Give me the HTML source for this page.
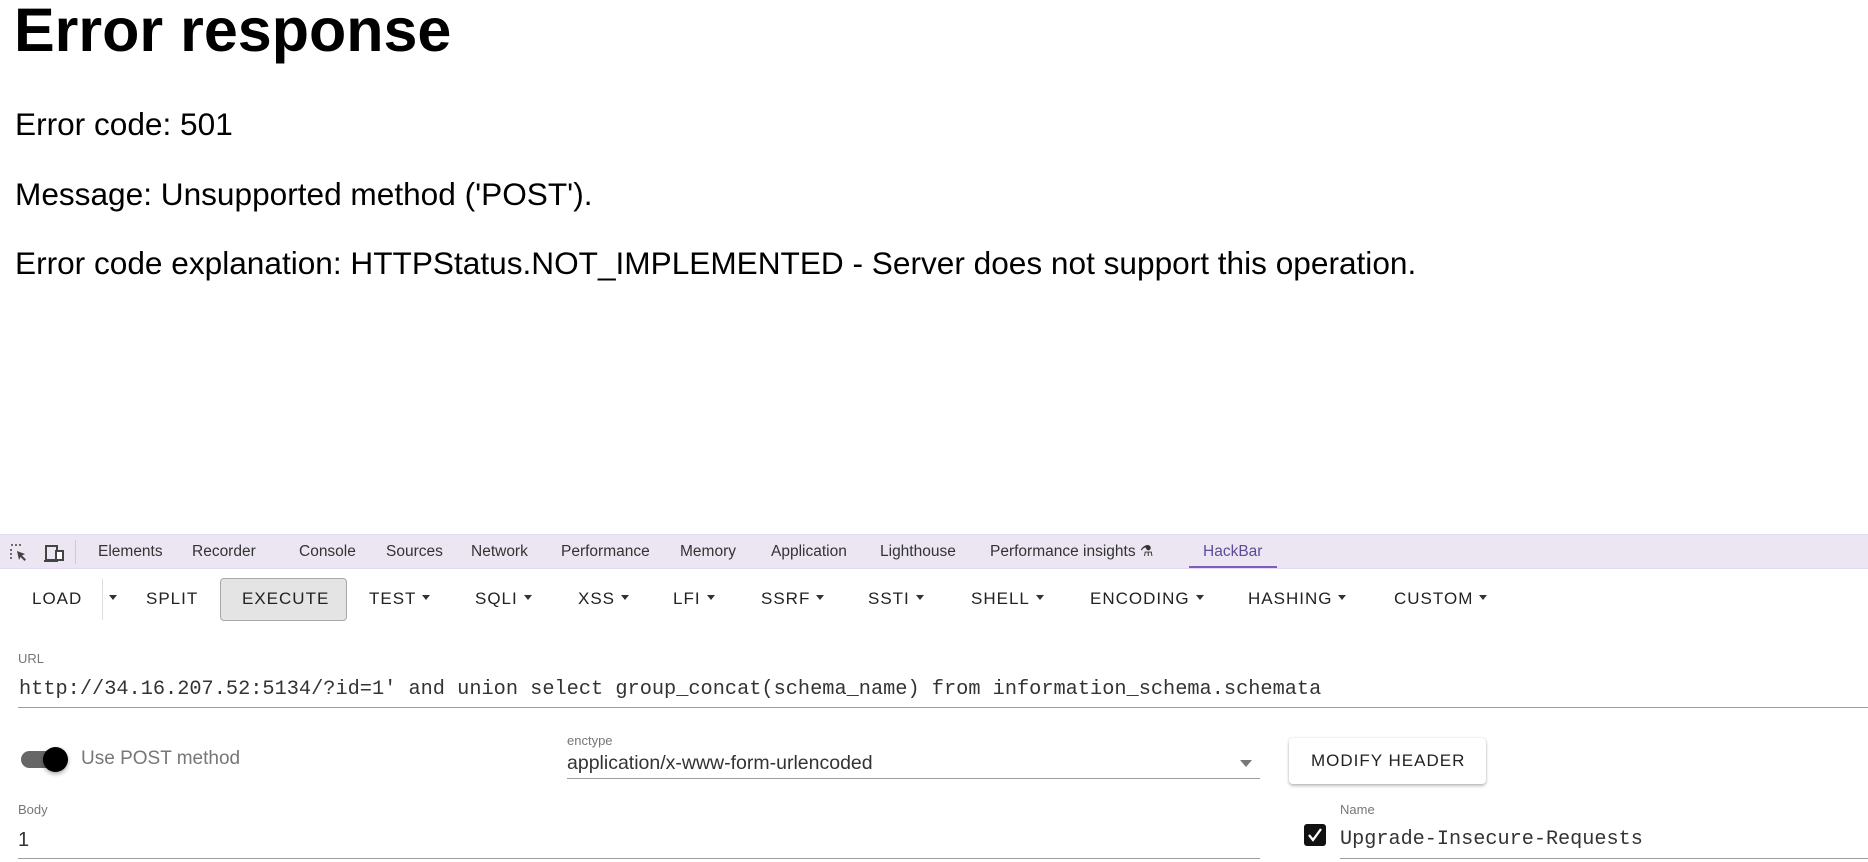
<!DOCTYPE html>
<html><head><meta charset="utf-8">
<style>
*{margin:0;padding:0;box-sizing:border-box}
body{width:1868px;height:862px;position:relative;overflow:hidden;background:#fff;font-family:"Liberation Sans",sans-serif;color:#000}
.a{position:absolute;white-space:nowrap}
.p{font-size:31.6px;line-height:40px;left:15px}
.tab{font-size:15.5px;color:#333;line-height:20px;top:542px}
.tb{font-size:17px;letter-spacing:1px;color:#222;line-height:24px;top:587px}
.tri{display:inline-block;width:0;height:0;border-left:4.5px solid transparent;border-right:4.5px solid transparent;border-top:5px solid #333;vertical-align:middle;margin-left:6px;position:relative;top:-2px}
.lbl{font-size:13px;color:#777;line-height:16px}
.line{position:absolute;height:1px;background:#9e9e9e}
.mono{font-family:"Liberation Mono",monospace;color:#333}
</style></head><body>
<div class="a" style="left:14px;top:-8px;font-size:61px;font-weight:bold;line-height:76px">Error response</div>
<div class="a p" style="top:104px">Error code: 501</div>
<div class="a p" style="top:174px">Message: Unsupported method ('POST').</div>
<div class="a p" style="top:243px">Error code explanation: HTTPStatus.NOT_IMPLEMENTED - Server does not support this operation.</div>

<div class="a" style="left:0;top:534px;width:1868px;height:35px;background:#ece6f3;border-top:1px solid #e3d8f5;border-bottom:1px solid #e3d8f5"></div>
<svg class="a" style="left:9px;top:543px" width="20" height="20" viewBox="0 0 20 20"><path d="M2 2h2M6 2h2M10 2h2M2 6v2M2 10v2M2 14v2" stroke="#444" stroke-width="1.5"/><path d="M8 8l8 3-3 1.5 4 4-1.5 1.5-4-4L10 17z" fill="#444"/></svg>
<svg class="a" style="left:44px;top:543px" width="22" height="20" viewBox="0 0 22 20"><rect x="2" y="3" width="11" height="14" fill="none" stroke="#444" stroke-width="2"/><rect x="12" y="8" width="7" height="9" fill="#fff" stroke="#444" stroke-width="2"/><path d="M0 18h14" stroke="#444" stroke-width="2"/></svg>
<div class="a" style="left:75px;top:540px;width:1px;height:24px;background:#ccc"></div>
<div class="a tab" style="left:98px">Elements</div>
<div class="a tab" style="left:192px">Recorder</div>
<div class="a tab" style="left:299px">Console</div>
<div class="a tab" style="left:386px">Sources</div>
<div class="a tab" style="left:471px">Network</div>
<div class="a tab" style="left:561px">Performance</div>
<div class="a tab" style="left:680px">Memory</div>
<div class="a tab" style="left:771px">Application</div>
<div class="a tab" style="left:880px">Lighthouse</div>
<div class="a tab" style="left:990px">Performance insights <span style="font-size:15px">⚗</span></div>
<div class="a tab" style="left:1203px;color:#5e4a99">HackBar</div>
<div class="a" style="left:1189px;top:566px;width:88px;height:2px;background:#7a5fb5"></div>

<div class="a tb" style="left:32px">LOAD</div>
<div class="a" style="left:102px;top:579px;width:1px;height:41px;background:#ddd"></div>
<div class="a tb" style="left:103px"><span class="tri"></span></div>
<div class="a tb" style="left:146px">SPLIT</div>
<div class="a" style="left:220px;top:578px;width:127px;height:43px;background:#e4e4e4;border:1.5px solid #a8a8a8;border-radius:4px"></div>
<div class="a tb" style="left:242px">EXECUTE</div>
<div class="a tb" style="left:369px">TEST<span class="tri"></span></div>
<div class="a tb" style="left:475px">SQLI<span class="tri"></span></div>
<div class="a tb" style="left:578px">XSS<span class="tri"></span></div>
<div class="a tb" style="left:673px">LFI<span class="tri"></span></div>
<div class="a tb" style="left:761px">SSRF<span class="tri"></span></div>
<div class="a tb" style="left:868px">SSTI<span class="tri"></span></div>
<div class="a tb" style="left:971px">SHELL<span class="tri"></span></div>
<div class="a tb" style="left:1090px">ENCODING<span class="tri"></span></div>
<div class="a tb" style="left:1248px">HASHING<span class="tri"></span></div>
<div class="a tb" style="left:1394px">CUSTOM<span class="tri"></span></div>

<div class="a lbl" style="left:18px;top:651px">URL</div>
<div class="a mono" style="left:19px;top:677px;font-size:20.3px;line-height:26px">http://34.16.207.52:5134/?id=1' and union select group_concat(schema_name) from information_schema.schemata</div>
<div class="line" style="left:18px;top:707px;width:1850px"></div>

<div class="a" style="left:21px;top:751px;width:46px;height:17px;border-radius:9px;background:#666"></div>
<div class="a" style="left:43px;top:747px;width:25px;height:25px;border-radius:50%;background:#000;box-shadow:0 2px 4px rgba(0,0,0,.35)"></div>
<div class="a" style="left:81px;top:748px;font-size:19px;color:#777;line-height:22px">Use POST method</div>

<div class="a lbl" style="left:567px;top:733px">enctype</div>
<div class="a" style="left:567px;top:752px;font-size:19.5px;color:#333;line-height:22px">application/x-www-form-urlencoded</div>
<div class="a" style="left:1240px;top:760px;width:0;height:0;border-left:6px solid transparent;border-right:6px solid transparent;border-top:7px solid #777"></div>
<div class="line" style="left:567px;top:778px;width:693px"></div>

<div class="a" style="left:1289px;top:738px;width:197px;height:46px;background:#fff;border-radius:4px;box-shadow:0 2px 3px rgba(0,0,0,.25),0 0 2px rgba(0,0,0,.12)"></div>
<div class="a tb" style="left:1311px;top:749px">MODIFY HEADER</div>

<div class="a lbl" style="left:18px;top:802px">Body</div>
<div class="a" style="left:18px;top:828px;font-size:20px;color:#333;line-height:24px">1</div>
<div class="line" style="left:18px;top:858px;width:1242px"></div>

<div class="a lbl" style="left:1340px;top:802px">Name</div>
<div class="a" style="left:1304px;top:824px;width:22px;height:22px;background:#111;border-radius:3px"></div>
<svg class="a" style="left:1304px;top:824px" width="22" height="22" viewBox="0 0 22 22"><path d="M5 11l4 5 8-11" fill="none" stroke="#fff" stroke-width="2.3"/></svg>
<div class="a mono" style="left:1340px;top:828px;font-size:20.2px;line-height:24px">Upgrade-Insecure-Requests</div>
<div class="line" style="left:1340px;top:858px;width:528px"></div>
</body></html>
